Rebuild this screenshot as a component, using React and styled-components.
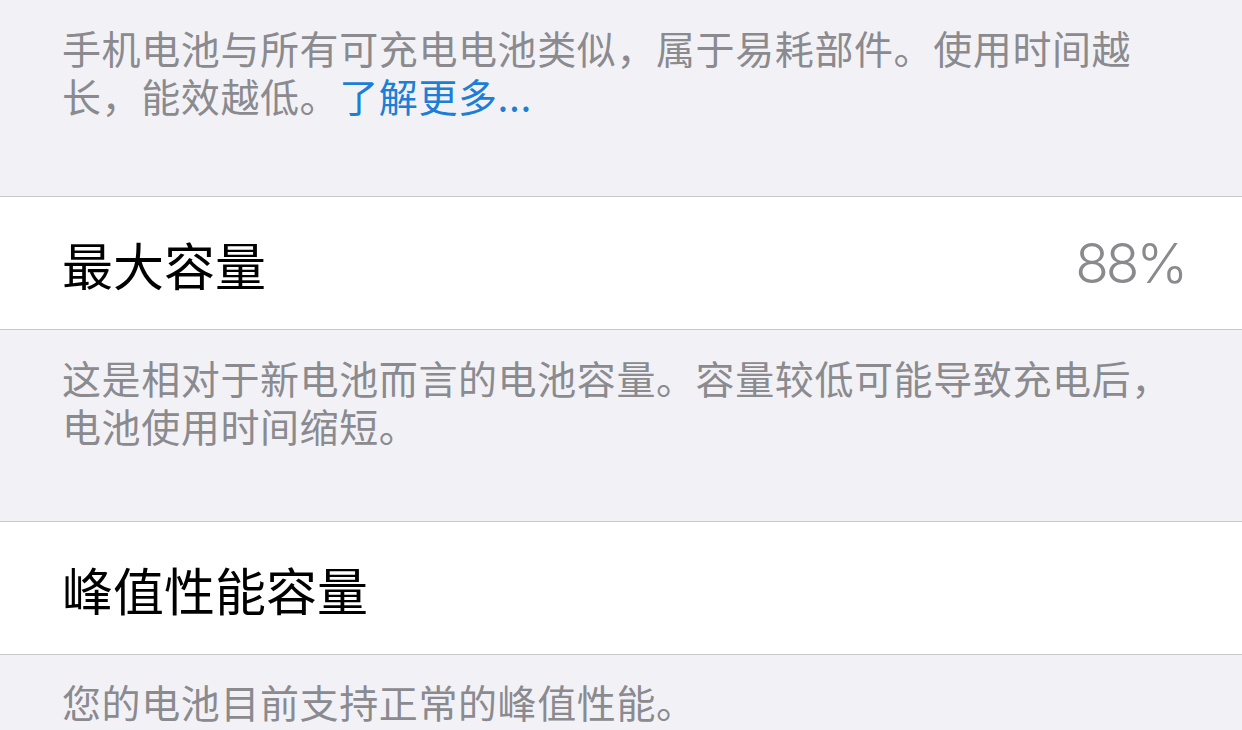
import React from "react";
import styled, { createGlobalStyle } from "styled-components";

const GlobalStyle = createGlobalStyle`
  html, body {
    margin: 0;
    padding: 0;
    background: #f2f2f6;
  }
  body {
    font-family: "Noto Sans CJK SC", "Noto Sans", sans-serif;
    -webkit-font-smoothing: antialiased;
  }
`;

const Page = styled.div`
  width: 1242px;
  height: 730px;
  overflow: hidden;
  background: #f2f2f6;
  display: flex;
  flex-direction: column;
`;

const Footer = styled.div`
  flex-shrink: 0;
  padding: ${(props) => props.top || 23}px 40px ${(props) => props.bottom || 74}px 62px;
  font-size: 39px;
  letter-spacing: 0.6px;
  line-height: 48px;
  color: #8a8a8f;
  white-space: nowrap;
`;

const Line = styled.div``;

const Link = styled.span`
  color: #1c7ed6;
`;

const Cell = styled.div`
  flex-shrink: 0;
  height: 132px;
  background: #fff;
  border-top: 1px solid #c8c7cc;
  border-bottom: 1px solid #c8c7cc;
  display: flex;
  align-items: center;
  justify-content: space-between;
  padding: 0 60px 0 62px;
`;

const Title = styled.div`
  font-size: 51px;
  color: #000;
  line-height: 1;
  padding-top: 2px;
`;

const Value = styled.div`
  font-family: Inter, "Liberation Sans", sans-serif;
  font-weight: 300;
  font-size: 55px;
  letter-spacing: -3px;
  color: #8a8a8e;
  line-height: 1;
  margin-right: -3px;
`;

export default function App() {
  return (
    <>
      <GlobalStyle />
      <Page>
        <Footer top={23} bottom={77}>
          <Line>手机电池与所有可充电电池类似，属于易耗部件。使用时间越</Line>
          <Line>
            长，能效越低。<Link>了解更多...</Link>
          </Line>
        </Footer>
        <Cell>
          <Title>最大容量</Title>
          <Value>88%</Value>
        </Cell>
        <Footer top={23} bottom={72}>
          <Line>这是相对于新电池而言的电池容量。容量较低可能导致充电后，</Line>
          <Line>电池使用时间缩短。</Line>
        </Footer>
        <Cell>
          <Title>峰值性能容量</Title>
        </Cell>
        <Footer top={22}>
          <Line>您的电池目前支持正常的峰值性能。</Line>
        </Footer>
      </Page>
    </>
  );
}
